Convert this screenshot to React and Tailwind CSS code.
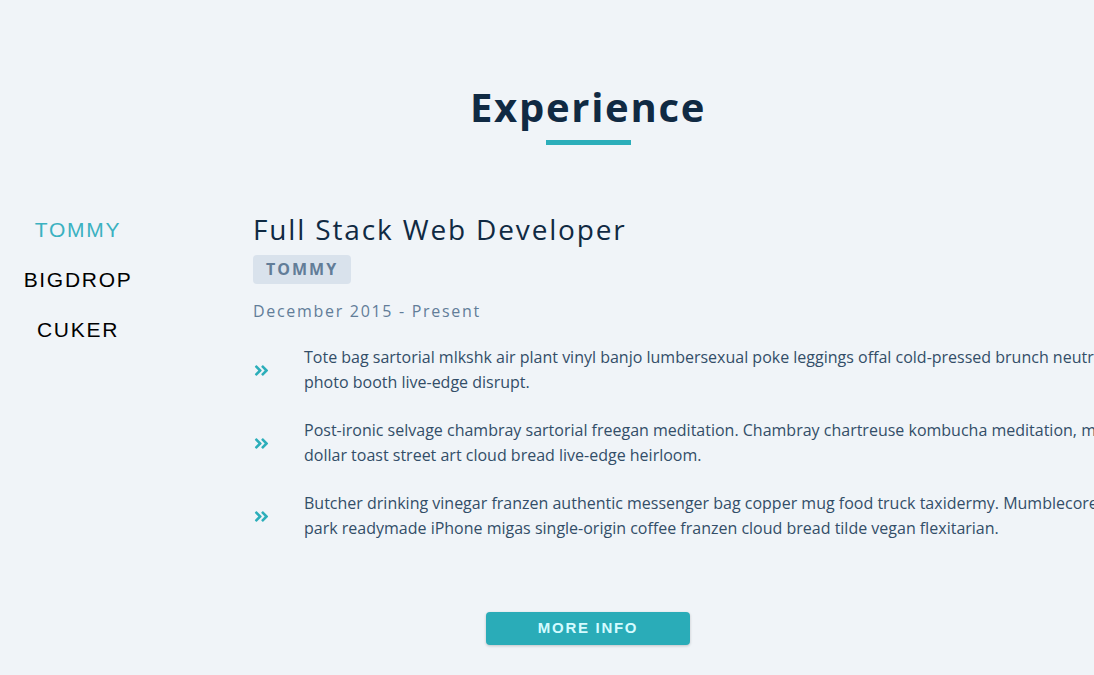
import { useState } from 'react';
import { FaAngleDoubleRight } from 'react-icons/fa';

const jobs = [
  {
    company: 'TOMMY',
    title: 'Full Stack Web Developer',
    dates: 'December 2015 - Present',
    duties: [
      'Tote bag sartorial mlkshk air plant vinyl banjo lumbersexual poke leggings offal cold-pressed brunch neutra. Hammock photo booth live-edge disrupt.',
      'Post-ironic selvage chambray sartorial freegan meditation. Chambray chartreuse kombucha meditation, man bun four dollar toast street art cloud bread live-edge heirloom.',
      'Butcher drinking vinegar franzen authentic messenger bag copper mug food truck taxidermy. Mumblecore lomo echo park readymade iPhone migas single-origin coffee franzen cloud bread tilde vegan flexitarian.',
    ],
  },
  { company: 'BIGDROP', title: 'Front-End Engineer', dates: 'May 2015 - December 2015', duties: [] },
  { company: 'CUKER', title: 'Engineering Intern', dates: 'May 2014 - September 2015', duties: [] },
];

export default function App() {
  const [value, setValue] = useState(0);
  const { title, dates, duties, company } = jobs[value];

  return (
    <div className="min-h-screen overflow-hidden bg-[#f0f4f8] font-['Open_Sans',sans-serif]">
      <div className="w-[1176px] pt-[82px] pb-10">
        <div className="text-center">
          <h2 className="text-[40px] font-bold leading-[1.25] tracking-[1.7px] text-[#102a43]">Experience</h2>
          <div className="mx-auto mt-[8px] h-[5px] w-[85px] bg-[#2caeba]" />
        </div>

        <div className="mt-[70px] flex">
          <div className="flex w-[156px] shrink-0 flex-col items-center gap-[21px]">
            {jobs.map((job, i) => (
              <button
                key={job.company}
                onClick={() => setValue(i)}
                className={`font-['Liberation_Sans',Arial,sans-serif] text-[21px] leading-[29px] tracking-[1.7px] ${
                  i === value ? 'text-[#3bb1c1]' : 'text-black'
                }`}
              >
                {job.company}
              </button>
            ))}
          </div>

          <article className="ml-[97px] w-[951px] shrink-0">
            <h3 className="text-[28px] font-normal leading-[28px] tracking-[1.85px] text-[#102a43]">{title}</h3>
            <h4 className="mt-[12px] inline-block rounded-[4px] bg-[#d9e2ec] px-[13px] text-[16px] font-bold leading-[29px] tracking-[2px] text-[#627d98]">
              {company}
            </h4>
            <p className="mt-[15px] text-[16px] leading-[25px] tracking-[1.7px] text-[#627d98]">{dates}</p>
            <div className="mt-[21px] flex flex-col gap-[23px]">
              {duties.map((duty, i) => (
                <div key={i} className="grid grid-cols-[17px_1fr] items-center gap-x-[34px]">
                  <FaAngleDoubleRight className="h-[17px] w-[17px] text-[#2caeba]" />
                  <p className="text-[16px] leading-[25px] text-[#334e68]">{duty}</p>
                </div>
              ))}
            </div>
          </article>
        </div>

        <button className="mx-auto mt-[71px] block h-[33px] w-[204px] rounded-[4px] bg-[#2aacb8] font-['Liberation_Sans',Arial,sans-serif] text-[15px] font-bold tracking-[1.7px] text-[#d4fbff] shadow-[0_1px_3px_rgba(0,0,0,0.2)]">
          MORE INFO
        </button>
      </div>
    </div>
  );
}
